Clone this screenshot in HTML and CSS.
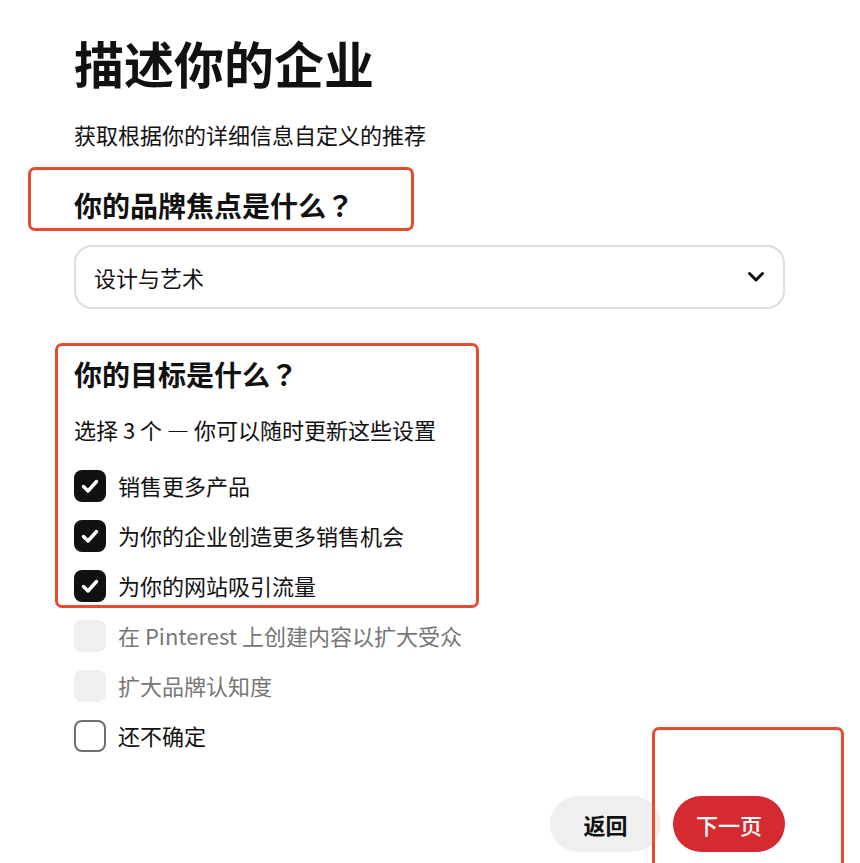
FILE: index.html
```html
<!DOCTYPE html>
<html lang="zh-CN">
<head>
<meta charset="utf-8">
<title>描述你的企业</title>
<link rel="stylesheet" href="styles.css">
</head>
<body>
<main class="page">
  <h1 class="title">描述你的企业</h1>
  <p class="subtitle">获取根据你的详细信息自定义的推荐</p>

  <h2 class="heading heading-brand">你的品牌焦点是什么<span class="qmark" lang="zh-TW">？</span></h2>
  <div class="select">
    <span class="select-value">设计与艺术</span>
    <svg class="chevron" width="20" height="20" viewBox="0 0 20 20" aria-hidden="true">
      <path d="M3.5 6.5 L10 13 L16.5 6.5" fill="none" stroke="#111" stroke-width="3" stroke-linecap="round" stroke-linejoin="round"/>
    </svg>
  </div>

  <h2 class="heading heading-goal">你的目标是什么<span class="qmark" lang="zh-TW">？</span></h2>
  <p class="helper">选择 3 个 — 你可以随时更新这些设置</p>

  <ul class="options">
    <li class="option">
      <span class="box box-checked"><svg width="32" height="32" viewBox="0 0 32 32"><path d="M9.5 16.5 L14 21 L22.5 11.5" fill="none" stroke="#fff" stroke-width="3.4" stroke-linecap="round" stroke-linejoin="round"/></svg></span>
      <span class="label">销售更多产品</span>
    </li>
    <li class="option">
      <span class="box box-checked"><svg width="32" height="32" viewBox="0 0 32 32"><path d="M9.5 16.5 L14 21 L22.5 11.5" fill="none" stroke="#fff" stroke-width="3.4" stroke-linecap="round" stroke-linejoin="round"/></svg></span>
      <span class="label">为你的企业创造更多销售机会</span>
    </li>
    <li class="option">
      <span class="box box-checked"><svg width="32" height="32" viewBox="0 0 32 32"><path d="M9.5 16.5 L14 21 L22.5 11.5" fill="none" stroke="#fff" stroke-width="3.4" stroke-linecap="round" stroke-linejoin="round"/></svg></span>
      <span class="label">为你的网站吸引流量</span>
    </li>
    <li class="option option-disabled">
      <span class="box box-disabled"></span>
      <span class="label">在 Pinterest 上创建内容以扩大受众</span>
    </li>
    <li class="option option-disabled">
      <span class="box box-disabled"></span>
      <span class="label">扩大品牌认知度</span>
    </li>
    <li class="option">
      <span class="box box-empty"></span>
      <span class="label">还不确定</span>
    </li>
  </ul>

  <div class="actions">
    <button class="btn btn-back">返回</button>
    <button class="btn btn-next">下一页</button>
  </div>
</main>

<div class="mark mark-1"></div>
<div class="mark mark-2"></div>
<div class="mark mark-3"></div>
</body>
</html>
```

FILE: styles.css
```css
html, body {
  margin: 0;
  padding: 0;
  background: #fff;
}

body {
  font-family: "Noto Sans CJK SC", "Noto Sans", "Liberation Sans", sans-serif;
  color: #111;
  position: relative;
  height: 863px;
  overflow: hidden;
}

.page {
  padding: 0 75px 0 74px;
  display: flex;
  flex-direction: column;
}

.title {
  margin: 33px 0 0;
  font-size: 50px;
  line-height: 58px;
  font-weight: 700;
}

.subtitle {
  margin: 28px 0 0;
  font-size: 22px;
  line-height: 30px;
  font-weight: 400;
}

.heading {
  margin: 0;
  font-size: 28px;
  line-height: 36px;
  font-weight: 700;
}

.qmark {
  font-family: "Noto Sans CJK TC", "Noto Sans CJK SC", sans-serif;
  font-weight: 700;
}

.heading-brand {
  margin-top: 38px;
}

.select {
  margin-top: 22px;
  height: 64px;
  box-sizing: border-box;
  border: 2px solid #dedede;
  border-radius: 18px;
  display: flex;
  align-items: center;
  justify-content: space-between;
  padding: 0 17px 0 18px;
}

.select-value {
  font-size: 22px;
  line-height: 30px;
}

.chevron {
  display: block;
}

.heading-goal {
  margin-top: 47px;
}

.helper {
  margin: 22px 0 0;
  font-size: 22px;
  line-height: 30px;
}

.options {
  list-style: none;
  margin: 26px 0 0;
  padding: 0;
  display: flex;
  flex-direction: column;
  gap: 18px;
}

.option {
  display: flex;
  align-items: center;
  gap: 12px;
  height: 32px;
}

.label {
  font-size: 22px;
  line-height: 30px;
  margin-top: -2px;
}

.option-disabled .label {
  color: #767676;
}

.box {
  width: 32px;
  height: 32px;
  box-sizing: border-box;
  border-radius: 8px;
  flex: none;
  display: flex;
}

.box svg {
  display: block;
}

.box-checked {
  background: #111;
}

.box-disabled {
  background: #efefef;
}

.box-empty {
  border: 2px solid #6f6f6f;
}

.actions {
  margin-top: 44px;
  display: flex;
  justify-content: flex-end;
  gap: 12px;
}

.btn {
  height: 56px;
  border: none;
  border-radius: 28px;
  font-family: inherit;
  font-size: 22px;
  font-weight: 700;
  line-height: 30px;
  cursor: pointer;
}

.btn-back {
  width: 111px;
  background: #efefef;
  color: #111;
}

.btn-next {
  width: 112px;
  background: #d52b30;
  color: #fff;
  font-weight: 500;
}

.mark {
  position: absolute;
  border: 3px solid #ea4a2f;
  border-radius: 7px;
  box-sizing: border-box;
  pointer-events: none;
}

.mark-1 {
  left: 28px;
  top: 167px;
  width: 386px;
  height: 64px;
}

.mark-2 {
  left: 55px;
  top: 343px;
  width: 424px;
  height: 265px;
}

.mark-3 {
  left: 652px;
  top: 727px;
  width: 192px;
  height: 136px;
  border-bottom: none;
  border-bottom-left-radius: 0;
  border-bottom-right-radius: 0;
}
```
